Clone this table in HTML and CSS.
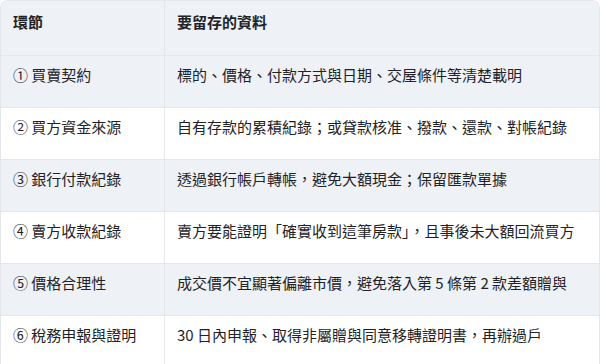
FILE: index.html
```html
<!DOCTYPE html>
<html lang="zh-Hant">
<head>
<meta charset="utf-8">
<link rel="stylesheet" href="styles.css">
</head>
<body>
<div class="wrap">
<table class="tbl">
<thead>
<tr><th class="c1">環節</th><th>要留存的資料</th></tr>
</thead>
<tbody>
<tr><td class="c1">① 買賣契約</td><td>標的、價格、付款方式與日期、交屋條件等清楚載明</td></tr>
<tr><td class="c1">② 買方資金來源</td><td>自有存款的累積紀錄；或貸款核准、撥款、還款、對帳紀錄</td></tr>
<tr><td class="c1">③ 銀行付款紀錄</td><td>透過銀行帳戶轉帳，避免大額現金；保留匯款單據</td></tr>
<tr><td class="c1">④ 賣方收款紀錄</td><td>賣方要能證明「確實收到這筆房款」，且事後未大額回流買方</td></tr>
<tr><td class="c1">⑤ 價格合理性</td><td>成交價不宜顯著偏離市價，避免落入第 5 條第 2 款差額贈與</td></tr>
<tr><td class="c1">⑥ 稅務申報與證明</td><td>30 日內申報、取得非屬贈與同意移轉證明書，再辦過戶</td></tr>
</tbody>
</table>
</div>
</body>
</html>
```
FILE: styles.css
```css
html, body {
  margin: 0;
  padding: 0;
  background: #ffffff;
  overflow: hidden;
}
body {
  width: 600px;
  height: 364px;
  font-family: "Noto Sans CJK TC", "Noto Sans", sans-serif;
  font-size: 15px;
  color: #1f2328;
}
.wrap {
  width: 600px;
  box-sizing: border-box;
  border: 1px solid #e3e6ea;
  border-bottom: none;
  border-radius: 8px 8px 0 0;
  overflow: hidden;
}
.tbl {
  width: 100%;
  border-collapse: collapse;
  table-layout: fixed;
}
.tbl th, .tbl td {
  text-align: left;
  line-height: 22px;
  padding: 8px 12px 21px 12px;
  border-bottom: 1px solid #e3e6ea;
  white-space: nowrap;
  overflow: hidden;
}
.tbl th {
  font-weight: 700;
  padding-top: 10px;
  padding-bottom: 22px;
  background: #eef1f5;
}
.tbl .c1 {
  width: 139px;
  border-right: 1px solid #e3e6ea;
}
.tbl tbody tr:nth-child(odd) td {
  background: #eef1f5;
}
.tbl tbody tr:nth-child(even) td {
  background: #ffffff;
}
```
